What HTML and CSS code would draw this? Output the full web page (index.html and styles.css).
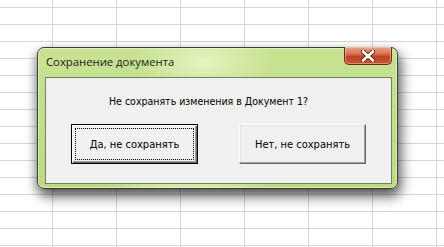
FILE: index.html
```html
<!DOCTYPE html>
<html lang="ru">
<head>
<meta charset="utf-8">
<title>Сохранение документа</title>
<link rel="stylesheet" href="styles.css">
</head>
<body>
<div class="sheet">
  <div class="dialog">
    <div class="titlebar">
      <span class="title">Сохранение документа</span>
      <div class="close">
        <svg width="20" height="12" viewBox="0 0 20 12" aria-hidden="true">
          <path d="M5 1.5 L15 10.5 M15 1.5 L5 10.5" stroke="#5a2a1a" stroke-width="4.4" stroke-linecap="round"/>
          <path d="M5 1.5 L15 10.5 M15 1.5 L5 10.5" stroke="#ffffff" stroke-width="2.6" stroke-linecap="round"/>
        </svg>
      </div>
    </div>
    <div class="panel">
      <p class="message">Не сохранять изменения в Документ 1?</p>
      <div class="buttons">
        <button class="btn btn-default"><span class="focus">Да, не сохранять</span></button>
        <button class="btn">Нет, не сохранять</button>
      </div>
    </div>
  </div>
</div>
</body>
</html>
```

FILE: styles.css
```css
html, body {
  margin: 0;
  padding: 0;
}

body {
  width: 444px;
  height: 247px;
  overflow: hidden;
  background-color: #ffffff;
  background-image:
    linear-gradient(to right, #d6d6d6 1px, transparent 1px),
    linear-gradient(to bottom, #d6d6d6 1px, transparent 1px);
  background-size: 64px 17px, 64px 17px;
  background-position: 52px 7px, 52px 7px;
}

.sheet {
  padding: 47px 0 0 37px;
}

.dialog {
  box-sizing: border-box;
  width: 361px;
  height: 142px;
  border: 1px solid #34422a;
  border-radius: 7px;
  padding: 0 5px 4px 7px;
  background:
    radial-gradient(ellipse 70px 30px at 165px 14px, rgba(232, 246, 198, 0.9), rgba(232, 246, 198, 0) 100%),
    radial-gradient(ellipse 90px 8px at 150px 138px, rgba(226, 243, 188, 0.8), rgba(226, 243, 188, 0) 100%),
    linear-gradient(to bottom, #c8e292 0%, #bcdb7f 100%);
  box-shadow:
    inset 0 0 0 1px rgba(255, 255, 255, 0.45),
    3px 7px 13px rgba(0, 0, 0, 0.6),
    -2px 4px 10px rgba(0, 0, 0, 0.25);
}

.titlebar {
  height: 29px;
  display: flex;
  align-items: flex-start;
  justify-content: space-between;
}

.title {
  font-family: "Open Sans", "Noto Sans", sans-serif;
  font-size: 11.3px;
  color: #1b1b1b;
  line-height: 16px;
  margin-top: 6px;
  margin-left: 1px;
}

.close {
  width: 48px;
  height: 18px;
  margin-top: -1px;
  box-sizing: border-box;
  border: 1px solid #6a2c1a;
  border-top: none;
  border-radius: 0 0 5px 5px;
  background: linear-gradient(to bottom, #e8a48c 0%, #d8735a 40%, #c04422 55%, #c9562f 100%);
  box-shadow: inset 0 0 0 1px rgba(255, 220, 200, 0.45);
  display: flex;
  align-items: center;
  justify-content: center;
}

.panel {
  box-sizing: border-box;
  height: 107px;
  border: 1px solid #737e66;
  background: #f0f0f0;
  padding-top: 16px;
  font-family: "DejaVu Sans Condensed", "DejaVu Sans", sans-serif;
  font-stretch: condensed;
  font-size: 11px;
  color: #000000;
}

.message {
  margin: 0;
  font-size: 10.5px;
  line-height: 14px;
  padding-left: 63px;
}

.buttons {
  margin-top: 16px;
  display: flex;
  justify-content: center;
  gap: 41px;
}

.btn {
  box-sizing: border-box;
  width: 127px;
  height: 40px;
  padding: 0;
  margin: 0;
  font-family: "DejaVu Sans Condensed", "DejaVu Sans", sans-serif;
  font-stretch: condensed;
  font-size: 11px;
  color: #000000;
  background: #f0f0f0;
  border: 1px solid;
  border-color: #ffffff #696969 #696969 #ffffff;
  box-shadow: inset -1px -1px 0 #a0a0a0, inset 1px 1px 0 #e3e3e3;
  display: flex;
  align-items: center;
  justify-content: center;
}

.btn-default {
  border: 1px solid #000000;
  box-shadow: inset 1px 1px 0 #ffffff, inset -1px -1px 0 #696969, inset -2px -2px 0 #a0a0a0;
  padding: 3px;
}

.focus {
  box-sizing: border-box;
  width: 100%;
  height: 100%;
  border: 1px dotted #000000;
  display: flex;
  align-items: center;
  justify-content: center;
}
```
